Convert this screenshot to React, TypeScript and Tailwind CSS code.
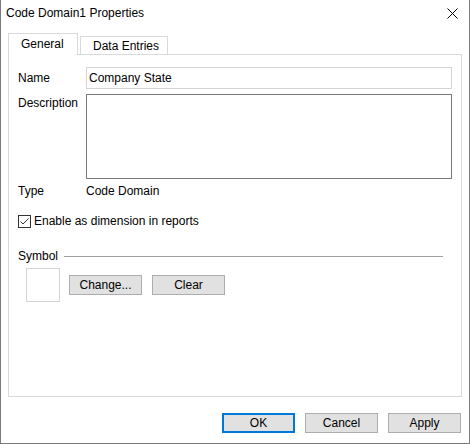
const Btn = ({ label, primary }: { label: string; primary?: boolean }) => (
  <button
    className={`h-[20px] w-[73px] bg-[#e1e1e1] text-[12px] leading-none text-black ${
      primary ? "border-2 border-[#0078d7]" : "border border-[#adadad]"
    }`}
  >
    {label}
  </button>
);

export default function App() {
  return (
    <div className="w-[470px] h-[444px] bg-white border-x border-b border-[#7a7a7a] flex flex-col text-[12px] text-black font-['Liberation_Sans',Arial,sans-serif]">
      {/* Title bar */}
      <div className="h-[33px] flex items-start justify-between pl-[5px] pr-[11px] pt-[5px]">
        <span className="leading-[16px]">Code Domain1 Properties</span>
        <svg width="11" height="11" viewBox="0 0 11 11" className="mt-[3px]">
          <path d="M0.5 0.5 L10.5 10.5 M10.5 0.5 L0.5 10.5" stroke="#000" strokeWidth="1" />
        </svg>
      </div>

      {/* Tabs */}
      <div className="mx-[7px] flex items-end gap-[2px] h-[21px]">
        <div className="relative z-10 -mb-px h-[22px] w-[70px] bg-white border border-b-0 border-[#d9d9d9] pl-[12px] pt-[2px] leading-[16px]">
          General
        </div>
        <div className="h-[18px] w-[88px] bg-white border border-b-0 border-[#d9d9d9] pl-[12px] pt-[1px] leading-[16px]">
          Data Entries
        </div>
      </div>

      {/* Panel */}
      <div className="mx-[7px] h-[343px] border border-[#d9d9d9] px-[9px] pt-[12px] flex flex-col">
        <div className="flex items-center">
          <span className="w-[68px]">Name</span>
          <div className="w-[366px] h-[22px] border border-[#d4d4d4] flex items-center px-[2px]">Company State</div>
        </div>
        <div className="flex mt-[5px]">
          <span className="w-[68px] pt-[1px] leading-[16px]">Description</span>
          <div className="w-[366px] h-[85px] border border-[#7a7a7a]" />
        </div>
        <div className="flex mt-[4px] leading-[16px]">
          <span className="w-[68px]">Type</span>
          <span>Code Domain</span>
        </div>
        <div className="flex items-center mt-[14px] h-[16px] gap-[3px]">
          <svg width="13" height="13" viewBox="0 0 13 13">
            <rect x="0.5" y="0.5" width="12" height="12" fill="#fff" stroke="#333" />
            <path d="M2.5 6.5 L5 9 L10.5 3.5" fill="none" stroke="#333" strokeWidth="1" />
          </svg>
          <span>Enable as dimension in reports</span>
        </div>
        <div className="flex items-center mt-[19px] h-[16px] pr-[9px]">
          <span>Symbol</span>
          <div className="flex-1 ml-[6px] h-px bg-[#a0a0a0]" />
        </div>
        <div className="flex items-start mt-[4px] ml-[8px]">
          <div className="w-[34px] h-[34px] border border-[#d4d4d4]" />
          <div className="mt-[7px] ml-[9px] flex gap-[10px]">
            <Btn label="Change..." />
            <Btn label="Clear" />
          </div>
        </div>
      </div>

      {/* Footer buttons */}
      <div className="mt-[16px] mr-[8px] flex justify-end gap-[10px]">
        <Btn label="OK" primary />
        <Btn label="Cancel" />
        <Btn label="Apply" />
      </div>
    </div>
  );
}
